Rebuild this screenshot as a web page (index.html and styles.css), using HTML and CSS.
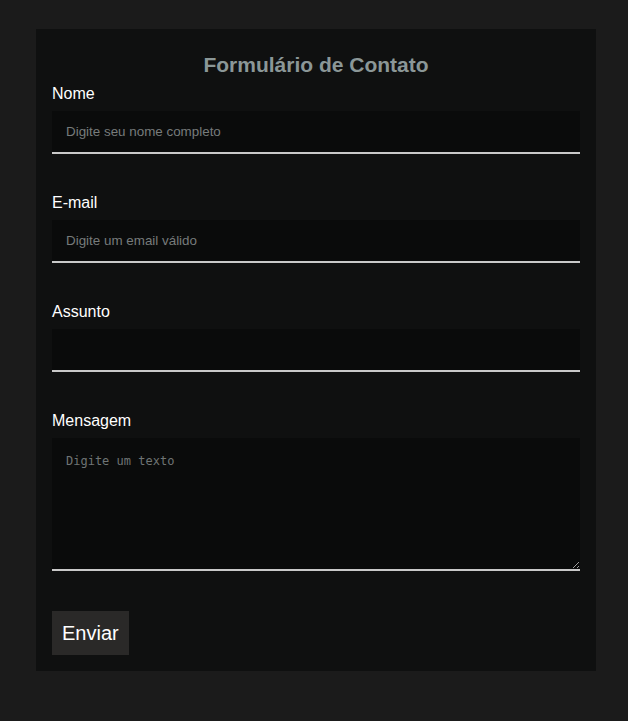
FILE: index.html
```html
<!DOCTYPE html>
<html lang="pt-BR">
<head>
<meta charset="utf-8">
<title>Formulário de Contato</title>
<link rel="stylesheet" href="styles.css">
</head>
<body>
<form class="card">
  <h2 class="title">Formulário de Contato</h2>
  <div class="field">
    <label class="label" for="nome">Nome</label>
    <input class="input" id="nome" type="text" placeholder="Digite seu nome completo">
  </div>
  <div class="field">
    <label class="label" for="email">E-mail</label>
    <input class="input" id="email" type="email" placeholder="Digite um email válido">
  </div>
  <div class="field">
    <label class="label" for="assunto">Assunto</label>
    <input class="input" id="assunto" type="text">
  </div>
  <div class="field">
    <label class="label" for="msg">Mensagem</label>
    <textarea class="textarea" id="msg" placeholder="Digite um texto"></textarea>
  </div>
  <button class="btn" type="button">Enviar</button>
</form>
</body>
</html>
```

FILE: styles.css
```css
html, body {
  margin: 0;
  padding: 0;
  background: #1b1b1b;
}
body {
  padding: 29px 0 0 36px;
  font-family: "Liberation Sans", Arial, sans-serif;
}
.card {
  width: 560px;
  box-sizing: border-box;
  background: #0f1010;
  padding: 16px 16px 16px;
  display: flex;
  flex-direction: column;
}
.title {
  margin: 8px 0 8px;
  font-size: 21px;
  line-height: 24px;
  font-weight: bold;
  text-align: center;
  color: #8b9797;
}
.field {
  display: flex;
  flex-direction: column;
  margin-bottom: 40px;
}
.label {
  color: #ffffff;
  font-size: 16px;
  line-height: 18px;
  margin-bottom: 8px;
}
.input, .textarea {
  box-sizing: border-box;
  width: 100%;
  background: #0a0b0b;
  border: none;
  border-bottom: 2px solid #c9c9c9;
  color: #ddd;
  outline: none;
  margin: 0;
}
.input {
  height: 43px;
  padding: 0 14px;
  font-family: "Liberation Sans", Arial, sans-serif;
  font-size: 13.4px;
}
.input::placeholder {
  color: #777b7b;
}
.textarea {
  height: 133px;
  padding: 15px 14px 13px;
  font-family: "DejaVu Sans Mono", monospace;
  font-size: 12px;
  line-height: 16px;
}
.textarea::placeholder {
  color: #6f7474;
}
.field:last-of-type {
  margin-bottom: 40px;
}
.btn {
  align-self: flex-start;
  height: 44px;
  padding: 0 10px;
  background: #2a2928;
  color: #ffffff;
  border: none;
  font-family: "Liberation Sans", Arial, sans-serif;
  font-size: 20px;
}
```
